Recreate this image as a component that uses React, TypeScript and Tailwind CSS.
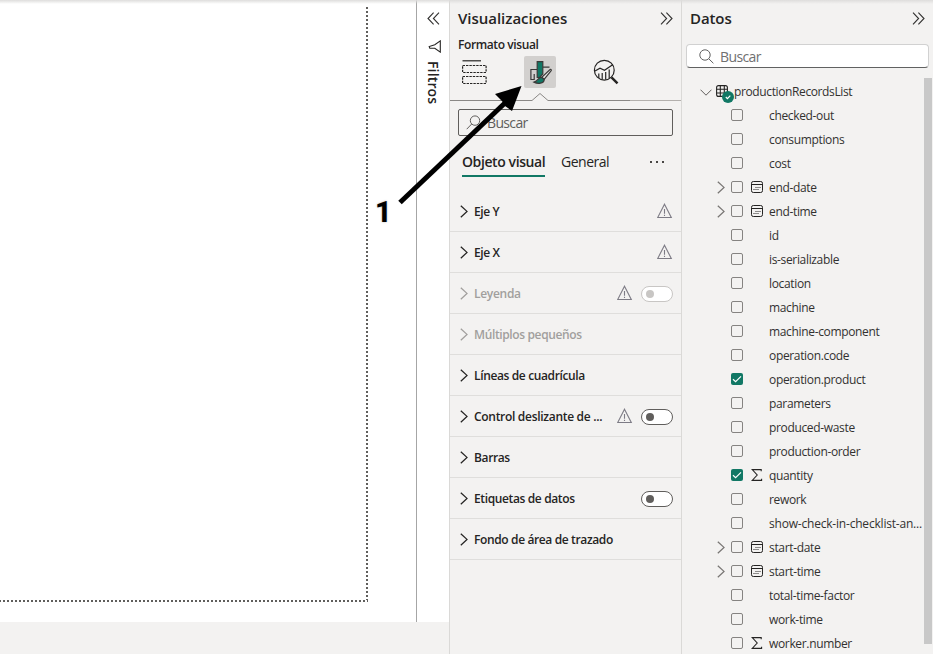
import React from 'react';

type Section = { label: string; warn?: boolean; toggle?: boolean; disabled?: boolean };

const sections: Section[] = [
  { label: 'Eje Y', warn: true },
  { label: 'Eje X', warn: true },
  { label: 'Leyenda', warn: true, toggle: true, disabled: true },
  { label: 'Múltiplos pequeños', disabled: true },
  { label: 'Líneas de cuadrícula' },
  { label: 'Control deslizante de ...', warn: true, toggle: true },
  { label: 'Barras' },
  { label: 'Etiquetas de datos', toggle: true },
  { label: 'Fondo de área de trazado' },
];

type Field = { name: string; icon?: 'date' | 'sum'; checked?: boolean };

const fields: Field[] = [
  { name: 'checked-out' },
  { name: 'consumptions' },
  { name: 'cost' },
  { name: 'end-date', icon: 'date' },
  { name: 'end-time', icon: 'date' },
  { name: 'id' },
  { name: 'is-serializable' },
  { name: 'location' },
  { name: 'machine' },
  { name: 'machine-component' },
  { name: 'operation.code' },
  { name: 'operation.product', checked: true },
  { name: 'parameters' },
  { name: 'produced-waste' },
  { name: 'production-order' },
  { name: 'quantity', icon: 'sum', checked: true },
  { name: 'rework' },
  { name: 'show-check-in-checklist-an...' },
  { name: 'start-date', icon: 'date' },
  { name: 'start-time', icon: 'date' },
  { name: 'total-time-factor' },
  { name: 'work-time' },
  { name: 'worker.number', icon: 'sum' },
];

function DoubleChevron({ left = false }: { left?: boolean }) {
  return (
    <svg width="13" height="13" viewBox="0 0 13 13" fill="none" stroke="#323130" strokeWidth="1.1" className={left ? 'rotate-180' : ''}>
      <path d="M1 .7 6.6 6.5 1 12.3M6.4.7 12 6.5 6.4 12.3" />
    </svg>
  );
}

function Chevron({ color }: { color: string }) {
  return (
    <svg width="8" height="13" viewBox="0 0 8 13" fill="none" stroke={color} strokeWidth="1.25" className="shrink-0">
      <path d="M.8.7 7 6.4.8 12.2" />
    </svg>
  );
}

function Warning() {
  return (
    <svg width="16" height="16" viewBox="0 0 16 16" fill="none" stroke="#7d7b85" strokeWidth="1.1">
      <path d="M7.5 1.2 14.3 14.5H.7ZM7.5 6v4.7M7.5 11.8v1.2" />
    </svg>
  );
}

function Toggle({ disabled }: { disabled?: boolean }) {
  return (
    <div className={`ml-2 mt-px flex h-4 w-8 items-center rounded-full border bg-white pl-1 ${disabled ? 'border-[#c8c6c4]' : 'border-[#605e5c]'}`}>
      <div className={`h-2 w-2 rounded-full ${disabled ? 'bg-[#c8c6c4]' : 'bg-[#605e5c]'}`} />
    </div>
  );
}

function Checkbox({ checked }: { checked?: boolean }) {
  return checked ? (
    <div className="mb-0.5 h-3 w-3 rounded-[2px] bg-[#117865]">
      <svg width="12" height="12" viewBox="0 0 12 12" fill="none" stroke="#fff" strokeWidth="1.2">
        <path d="M2 6.2 4.6 8.6 10 3.4" />
      </svg>
    </div>
  ) : (
    <div className="mb-0.5 h-3 w-3 rounded-[2px] border border-[#858381]" />
  );
}

function FieldIcon({ kind }: { kind?: 'date' | 'sum' }) {
  if (kind === 'date')
    return (
      <svg width="12" height="12" viewBox="0 0 12 12" fill="none" stroke="#252423">
        <rect x=".5" y=".5" width="11" height="11" rx="1.8" />
        <path d="M.5 3.5h11" />
        <path d="M4.5 6.5h1M6.5 6.5h1M8.5 6.5h1M2.5 8.5h1M4.5 8.5h1M6.5 8.5h1" />
      </svg>
    );
  if (kind === 'sum')
    return (
      <svg width="12" height="12" viewBox="0 0 12 12" fill="none" stroke="#252423" strokeWidth="1.1">
        <path d="M10.2 2.2V.6H1.2L6.2 6 1.2 11.4H10.6V9.8" />
      </svg>
    );
  return null;
}

function Canvas() {
  return (
    <div className="h-[622px] w-[417px] border-r border-[#a6a6a6] bg-white pt-[7px]">
      <div className="flex h-[595px] w-[368px] flex-col">
        <div className="flex flex-1 justify-end">
          <div className="w-[2px] bg-[repeating-linear-gradient(180deg,#605e5c_0px,#605e5c_2px,transparent_2px,transparent_4px)]" />
        </div>
        <div className="-ml-px h-[2px] bg-[repeating-linear-gradient(90deg,#605e5c_0px,#605e5c_2px,transparent_2px,transparent_4px)]" />
      </div>
    </div>
  );
}

function Filters() {
  return (
    <div className="flex h-[622px] w-8 flex-col items-center bg-white pt-3">
      <DoubleChevron left />
      <svg width="14" height="13" viewBox="0 0 14 13" fill="none" stroke="#252423" strokeWidth="1.1" className="ml-[3px] mt-[15px]">
        <path d="M12.3.9V12.1L6.8 8.2H1.8L1.2 6.6 6.8 4.8Z" />
      </svg>
      <div className="mr-px mt-[8px] h-[46px] text-[14px] font-semibold leading-4 tracking-[0.15px] [writing-mode:vertical-rl]">Filtros</div>
    </div>
  );
}

function Visualizations() {
  return (
    <div className="flex w-[233px] flex-col border-x border-[#dad9d7]">
      <div className="flex h-9 items-center justify-between pl-2 pr-[8px]">
        <span className="text-[15px] font-[550] tracking-[-0.02px]">Visualizaciones</span>
        <DoubleChevron />
      </div>
      <div className="h-5 pl-2 text-[12px] font-[550] leading-[18px] tracking-[-0.4px]">Formato visual</div>
      <div className="flex h-8 pl-2">
        <div className="flex h-8 w-8 items-center justify-center">
          <svg width="25" height="25" viewBox="0 0 25 25" fill="none" stroke="#252423" strokeWidth="1.2">
            <path d="M.5 .8H19" />
            <rect x=".6" y="5.5" width="23.5" height="7" strokeDasharray="2.4 1" />
            <rect x=".6" y="16.5" width="23.5" height="7" strokeDasharray="2.4 1" />
          </svg>
        </div>
        <div className="ml-[34px] flex h-8 w-8 items-center justify-center rounded-[2px] bg-[#d2d0ce]">
          <svg width="24" height="26" viewBox="0 0 24 26" fill="none" stroke="#3b3a39" strokeWidth="1.2">
            <path d="M9 10.5H2.9V20.5H6.2V15M15 8.2H21.5" />
            <path d="M9.2 2.6H14.8V15L11.5 18.5H9.2Z" fill="#117865" />
            <path d="M22.3 10.4C23.4 10.3 23.6 11.2 23 11.9L16.3 20.2 13.8 18.2Z" fill="#e8e7e5" />
            <path d="M13.4 18.4C9.8 18.2 10.8 21.9 6 23.1C9.8 25.2 16 24.6 16.2 20.6Z" fill="#117865" />
          </svg>
        </div>
        <div className="ml-[34px] flex h-8 w-8 items-center justify-center">
          <svg width="26" height="26" viewBox="0 0 26 26" fill="none" stroke="#252423" strokeWidth="1.2">
            <circle cx="11.3" cy="11.2" r="9.9" />
            <path d="M2 12 7 9.2 11.5 11.2 20 5.4M5.8 19v-4.5M9.2 20.5v-6.5M12.7 20.5v-7.5M16.2 19v-8.5" />
            <path d="m18.5 18.3 6 6" strokeWidth="2.4" />
          </svg>
        </div>
      </div>
      <svg width="231" height="14" viewBox="0 0 231 14" fill="none" className="block shrink-0">
        <path d="M0 12.5H82L90 5.5 98 12.5H180" stroke="#8a8886" />
        <path d="M180 12.5H231" stroke="#b3b0ad" />
      </svg>
      <div className="mx-2 mt-[7px] flex h-[27px] items-center rounded-[2px] border border-[#605e5c] pl-[7px] text-[14px] text-[#605e5c]">
        <svg width="15" height="15" viewBox="0 0 15 15" fill="none" stroke="#605e5c" strokeWidth="1">
          <circle cx="9" cy="5.6" r="4.7" />
          <path d="M5.7 9 .7 14.2" />
        </svg>
        <span className="ml-[6px] tracking-[-0.65px]">Buscar</span>
      </div>
      <div className="mt-4 flex h-[25px] pl-3 pr-[17px] text-[14px] leading-5">
        <div className="w-[83px] whitespace-nowrap border-b-2 border-[#117865] font-[550] tracking-[-0.4px]">Objeto visual</div>
        <div className="ml-4 tracking-[-0.5px]">General</div>
        <div className="ml-auto flex gap-1 pt-[9px]">
          <span className="h-[2px] w-[2px] bg-[#484644]" />
          <span className="h-[2px] w-[2px] bg-[#484644]" />
          <span className="h-[2px] w-[2px] bg-[#484644]" />
        </div>
      </div>
      <div className="mt-[14px]">
        {sections.map((s) => (
          <div key={s.label} className="flex h-[41px] items-center border-b border-[#dfdedc] pl-[10px] pr-2">
            <Chevron color={s.disabled ? '#a19f9d' : '#252423'} />
            <span className={`ml-[6px] mt-[2px] flex-1 whitespace-nowrap text-[12px] font-[550] ${s.toggle && s.warn ? 'tracking-[-0.3px]' : 'tracking-[-0.37px]'} ${s.disabled ? 'text-[#a19f9d]' : 'text-[#252423]'}`}>{s.label}</span>
            {s.warn && <Warning />}
            {s.toggle && <Toggle disabled={s.disabled} />}
          </div>
        ))}
      </div>
    </div>
  );
}

function DataPane() {
  return (
    <div className="flex w-[251px] flex-col">
      <div className="flex h-9 shrink-0 items-center justify-between pl-2 pr-[8px]">
        <span className="text-[15px] font-[550] tracking-[-0.1px]">Datos</span>
        <DoubleChevron />
      </div>
      <div className="ml-1 mr-[4px] mt-2 flex h-6 shrink-0 items-center rounded-[4px] border border-[#d1d1d1] border-b-[#616161] bg-white pl-3 text-[14px] text-[#707070]">
        <svg width="15" height="15" viewBox="0 0 15 15" fill="none" stroke="#616161" strokeWidth="1">
          <circle cx="6" cy="6" r="5.2" />
          <path d="m9.8 9.8 4.6 4.5" />
        </svg>
        <span className="ml-[6px] tracking-[-0.6px]">Buscar</span>
      </div>
      <div className="mt-[10px] flex shrink-0">
        <div className="min-w-0 flex-1 pt-[2px] text-[12px] text-[#323130]">
          <div className="flex h-6 items-center pl-[18px]">
            <svg width="12" height="7" viewBox="0 0 12 7" fill="none" stroke="#605e5c">
              <path d="M.5.7 6 6.2 11.5.7" />
            </svg>
            <div className="relative mb-0.5 ml-[4px] h-3 w-[18px]">
              <svg width="12" height="12" viewBox="0 0 12 12" fill="none" stroke="#252423" strokeWidth="1.1">
                <rect x=".6" y=".6" width="10.8" height="10.8" rx="2" />
                <path d="M4.3.5v11M8.3.5v11M.5 4.2h11M.5 8h11" />
              </svg>
              <svg width="12" height="12" viewBox="0 0 12 12" className="absolute left-[6px] top-[6px]">
                <circle cx="6" cy="6" r="6" fill="#117865" />
                <path d="m3.8 6 1.6 1.6 2.9-3" fill="none" stroke="#fff" strokeWidth="1.2" />
              </svg>
            </div>
            <span className="tracking-[-0.38px]">productionRecordsList</span>
          </div>
          {fields.map((f) => (
            <div key={f.name} className="flex h-6 items-center pl-[35px]">
              <div className="mb-0.5 w-[14px]">{f.icon === 'date' && <Chevron color="#797775" />}</div>
              <Checkbox checked={f.checked} />
              <div className="mb-0.5 ml-2 w-[18px]">
                <FieldIcon kind={f.icon} />
              </div>
              <span className={`whitespace-nowrap ${f.name.length > 20 ? 'tracking-[-0.2px]' : 'tracking-[-0.34px]'}`}>{f.name}</span>
            </div>
          ))}
        </div>
        <div className="mr-px h-[566px] w-2 bg-[#c8c8c8]" />
      </div>
    </div>
  );
}

export default function App() {
  return (
    <div className="relative flex h-[654px] w-[933px] overflow-hidden bg-[#f3f2f1] font-['Open_Sans',sans-serif] text-[#252423]">
      <Canvas />
      <Filters />
      <Visualizations />
      <DataPane />
      <div className="absolute left-0 top-0 h-1 w-full bg-linear-to-b from-[#dedddc] to-transparent" />
      <svg width="160" height="140" viewBox="370 80 160 140" className="absolute left-[370px] top-[80px]">
        <path d="M400 202.5 506 102" stroke="#000" strokeWidth="5" />
        <path d="M521.5 86 495 94 502 101 505 106 512 111Z" fill="#000" />
      </svg>
      <div className="absolute left-[375px] top-[196px] font-['Roboto',sans-serif] text-[29px] font-extrabold leading-8 text-black [text-shadow:0_0_2px_#aaa]">1</div>
    </div>
  );
}
